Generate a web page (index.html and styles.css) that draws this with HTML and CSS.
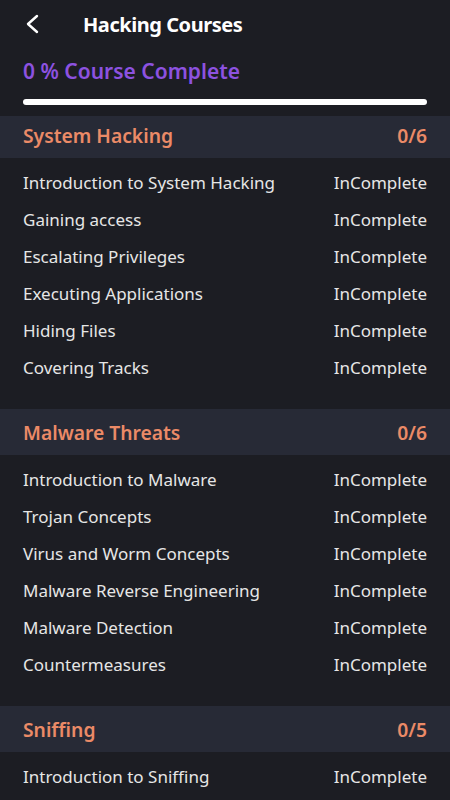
FILE: index.html
```html
<!DOCTYPE html>
<html>
<head>
<meta charset="utf-8">
<link rel="stylesheet" href="styles.css">
</head>
<body>
<div class="app">
  <header class="topbar">
    <svg class="back" width="14" height="20" viewBox="0 0 14 20"><path d="M12 2 L3 10 L12 18" fill="none" stroke="#ffffff" stroke-width="2.4" stroke-linecap="round" stroke-linejoin="round"/></svg>
    <h1 class="title">Hacking Courses</h1>
  </header>
  <div class="progress-label">0 % Course Complete</div>
  <div class="progress"><div class="progress-fill"></div></div>

  <section class="section first">
    <div class="band"><span>System Hacking</span><span>0/6</span></div>
    <ul class="rows">
      <li><span>Introduction to System Hacking</span><span>InComplete</span></li>
      <li><span>Gaining access</span><span>InComplete</span></li>
      <li><span>Escalating Privileges</span><span>InComplete</span></li>
      <li><span>Executing Applications</span><span>InComplete</span></li>
      <li><span>Hiding Files</span><span>InComplete</span></li>
      <li><span>Covering Tracks</span><span>InComplete</span></li>
    </ul>
  </section>

  <section class="section">
    <div class="band"><span>Malware Threats</span><span>0/6</span></div>
    <ul class="rows">
      <li><span>Introduction to Malware</span><span>InComplete</span></li>
      <li><span>Trojan Concepts</span><span>InComplete</span></li>
      <li><span>Virus and Worm Concepts</span><span>InComplete</span></li>
      <li><span>Malware Reverse Engineering</span><span>InComplete</span></li>
      <li><span>Malware Detection</span><span>InComplete</span></li>
      <li><span>Countermeasures</span><span>InComplete</span></li>
    </ul>
  </section>

  <section class="section">
    <div class="band"><span>Sniffing</span><span>0/5</span></div>
    <ul class="rows">
      <li><span>Introduction to Sniffing</span><span>InComplete</span></li>
    </ul>
  </section>
</div>
</body>
</html>
```
FILE: styles.css
```css
html, body {
  margin: 0;
  padding: 0;
  background: #1c1d23;
  overflow: hidden;
}
body {
  font-family: "Noto Sans", "Open Sans", sans-serif;
  color: #e6e6e6;
}
.app {
  width: 450px;
  height: 800px;
  overflow: hidden;
}
.topbar {
  height: 48px;
  display: flex;
  align-items: center;
  padding-left: 25px;
}
.back {
  display: block;
}
.title {
  margin: 0 0 0 44px;
  font-size: 20px;
  font-weight: 700;
  color: #ffffff;
  letter-spacing: -0.45px;
}
.progress-label {
  margin: 0 23px;
  height: 46px;
  line-height: 46px;
  font-size: 21px;
  font-weight: 600;
  color: #8d52e0;
}
.progress {
  margin: 5px 23px 0;
  height: 6px;
  border-radius: 3px;
  background: #ffffff;
}
.progress-fill {
  width: 0;
  height: 100%;
}
.section {
  display: flex;
  flex-direction: column;
}
.first {
  margin-top: 11px;
}
.band {
  height: 46px;
  background: #272a36;
  display: flex;
  align-items: center;
  justify-content: space-between;
  padding: 0 23px;
  font-size: 19.3px;
  font-weight: 600;
  color: #eb8a67;
}
.first .band {
  height: 42px;
  padding-bottom: 3px;
  box-sizing: border-box;
}
.rows {
  list-style: none;
  margin: 0;
  padding: 6px 23px 23px;
}
.rows li {
  height: 37px;
  display: flex;
  align-items: center;
  justify-content: space-between;
  font-size: 17px;
}
```
